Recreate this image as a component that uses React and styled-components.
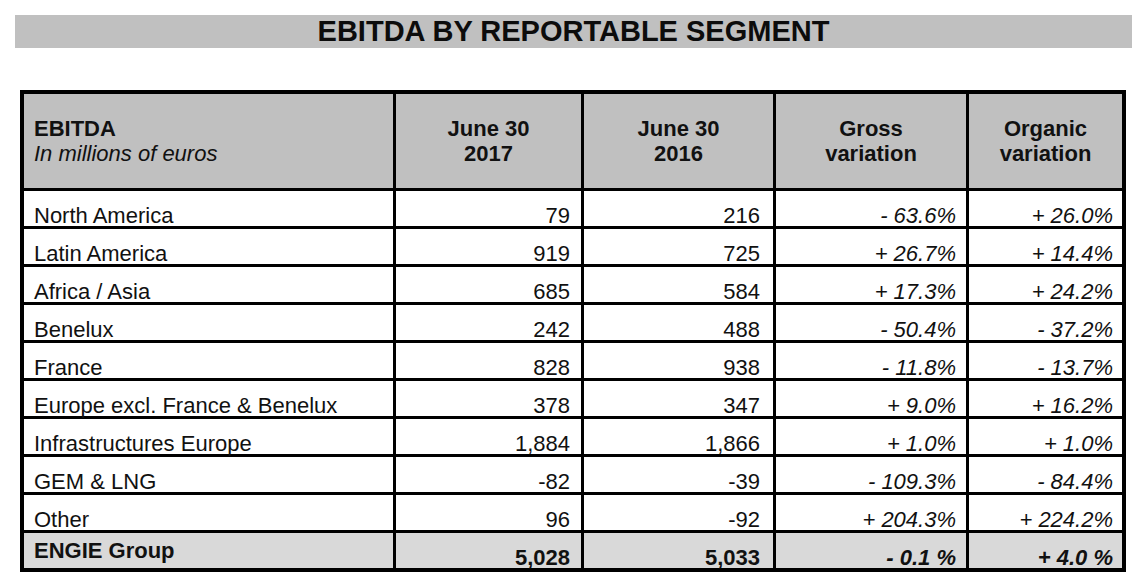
import React from 'react'
import styled, { createGlobalStyle } from 'styled-components'

const GlobalStyle = createGlobalStyle`
  body {
    margin: 0;
    background: #fff;
    font-family: "Liberation Sans", Arial, sans-serif;
    color: #000;
  }
`

const Page = styled.div`
  padding: 15px 15px 0 15px;
  display: flex;
  flex-direction: column;
  align-items: flex-start;
`

const TitleBar = styled.div`
  width: 1117px;
  height: 33px;
  background: #c0c0c0;
  display: flex;
  align-items: center;
  justify-content: center;
`

const Title = styled.h1`
  margin: 0;
  font-size: 29px;
  font-weight: 700;
  line-height: 33px;
  color: #0c0c0c;
`

const Table = styled.div`
  margin: 42px 0 0 5px;
  display: grid;
  grid-template-columns: 369px 185px 189px 190px 153px;
  grid-template-rows: 94px repeat(10, 35px);
  gap: 3px;
  background: #000;
  border: 4px solid #000;
`

const Cell = styled.div`
  display: flex;
  flex-direction: column;
  justify-content: ${p => (p.$valign === 'top' ? 'flex-start' : p.$valign === 'middle' ? 'center' : 'flex-end')};
  align-items: ${p => (p.$align === 'right' ? 'flex-end' : p.$align === 'center' ? 'center' : 'flex-start')};
  text-align: ${p => p.$align || 'left'};
  background: ${p => p.$bg || '#fff'};
  padding: ${p => p.$pad || '0 10px'};
  font-size: 22px;
  line-height: 20px;
  font-weight: ${p => (p.$bold ? 700 : 400)};
  font-style: ${p => (p.$italic ? 'italic' : 'normal')};
  color: #111;
  white-space: nowrap;
`

const HeadCell = styled(Cell)`
  line-height: 25px;
  font-weight: 700;
  background: #c0c0c0;
`

const SubHead = styled.span`
  font-weight: 400;
  font-style: italic;
`

const rows = [
  ['North America', '79', '216', '- 63.6%', '+ 26.0%'],
  ['Latin America', '919', '725', '+ 26.7%', '+ 14.4%'],
  ['Africa / Asia', '685', '584', '+ 17.3%', '+ 24.2%'],
  ['Benelux', '242', '488', '- 50.4%', '- 37.2%'],
  ['France', '828', '938', '- 11.8%', '- 13.7%'],
  ['Europe excl. France & Benelux', '378', '347', '+ 9.0%', '+ 16.2%'],
  ['Infrastructures Europe', '1,884', '1,866', '+ 1.0%', '+ 1.0%'],
  ['GEM & LNG', '-82', '-39', '- 109.3%', '- 84.4%'],
  ['Other', '96', '-92', '+ 204.3%', '+ 224.2%'],
]

const total = ['ENGIE Group', '5,028', '5,033', '- 0.1 %', '+ 4.0 %']

// right padding per numeric column, read off the reference
const padRight = ['0 11px 0 0', '0 13px 0 0', '0 10px 0 0', '0 9px 0 0']

export default function App() {
  return (
    <Page>
      <GlobalStyle />
      <TitleBar>
        <Title>EBITDA BY REPORTABLE SEGMENT</Title>
      </TitleBar>
      <Table>
        <HeadCell $valign="middle">
          <span>EBITDA</span>
          <SubHead>In millions of euros</SubHead>
        </HeadCell>
        <HeadCell $valign="middle" $align="center">
          <span>June 30</span>
          <span>2017</span>
        </HeadCell>
        <HeadCell $valign="middle" $align="center">
          <span>June 30</span>
          <span>2016</span>
        </HeadCell>
        <HeadCell $valign="middle" $align="center">
          <span>Gross</span>
          <span>variation</span>
        </HeadCell>
        <HeadCell $valign="middle" $align="center">
          <span>Organic</span>
          <span>variation</span>
        </HeadCell>

        {rows.map(r => (
          <React.Fragment key={r[0]}>
            <Cell>{r[0]}</Cell>
            <Cell $align="right" $pad={padRight[0]}>{r[1]}</Cell>
            <Cell $align="right" $pad={padRight[1]}>{r[2]}</Cell>
            <Cell $align="right" $pad={padRight[2]} $italic>{r[3]}</Cell>
            <Cell $align="right" $pad={padRight[3]} $italic>{r[4]}</Cell>
          </React.Fragment>
        ))}

        <Cell $bg="#d9d9d9" $bold $valign="top" $pad="8px 10px 0 10px">{total[0]}</Cell>
        <Cell $bg="#d9d9d9" $bold $align="right" $pad={padRight[0]}>{total[1]}</Cell>
        <Cell $bg="#d9d9d9" $bold $align="right" $pad={padRight[1]}>{total[2]}</Cell>
        <Cell $bg="#d9d9d9" $bold $italic $align="right" $pad={padRight[2]}>{total[3]}</Cell>
        <Cell $bg="#d9d9d9" $bold $italic $align="right" $pad={padRight[3]}>{total[4]}</Cell>
      </Table>
    </Page>
  )
}
